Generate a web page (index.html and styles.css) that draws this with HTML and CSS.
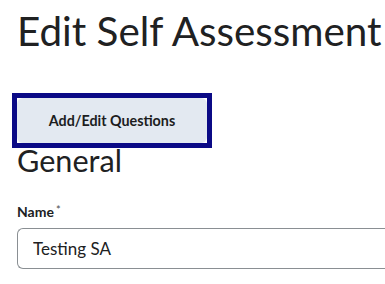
FILE: index.html
```html
<!DOCTYPE html>
<html lang="en">
<head>
<meta charset="utf-8">
<title>Edit Self Assessment</title>
<link rel="stylesheet" href="styles.css">
</head>
<body>
<main class="page">
  <h1 class="title">Edit Self Assessment</h1>
  <div class="focus-ring">
    <button class="btn" type="button">Add/Edit Questions</button>
  </div>
  <h2 class="section">General</h2>
  <label class="label" for="name">Name<span class="req">*</span></label>
  <input class="field" id="name" type="text" value="Testing SA">
</main>
</body>
</html>
```

FILE: styles.css
```css
html, body {
  margin: 0;
  padding: 0;
  background: #ffffff;
  overflow: hidden;
}
.page {
  font-family: Lato, "Noto Sans", sans-serif;
  color: #202122;
  padding: 0 0 0 17px;
  display: flex;
  flex-direction: column;
  align-items: flex-start;
  width: 368px;
}
.title {
  font-size: 40.4px;
  font-weight: 400;
  line-height: 48px;
  margin: 7px 0 0;
  white-space: nowrap;
}
.focus-ring {
  margin: 38px 0 0 -5px;
  border: 5px solid #0b0a86;
  display: flex;
}
.btn {
  width: 190px;
  height: 45px;
  border: none;
  border-radius: 6px;
  background: #e3e9f1;
  font-family: Lato, "Noto Sans", sans-serif;
  font-weight: 700;
  font-size: 14.3px;
  color: #1c1d1e;
  padding: 0;
  margin: 0;
}
.section {
  font-size: 30.6px;
  font-weight: 400;
  line-height: 26px;
  margin: 0;
}
.label {
  font-size: 14px;
  font-weight: 700;
  line-height: 16px;
  margin-top: 28px;
}
.req {
  color: #494c4e;
  font-weight: 400;
  font-size: 11px;
  vertical-align: 3px;
  margin-left: 2px;
}
.field {
  margin-top: 8px;
  box-sizing: border-box;
  width: 100%;
  height: 41px;
  border: 1px solid #8a8f93;
  border-right: none;
  border-radius: 6px 0 0 6px;
  padding: 0 15px;
  font-family: Lato, "Noto Sans", sans-serif;
  font-size: 17px;
  color: #202122;
  background: #fff;
  outline: none;
}
```
